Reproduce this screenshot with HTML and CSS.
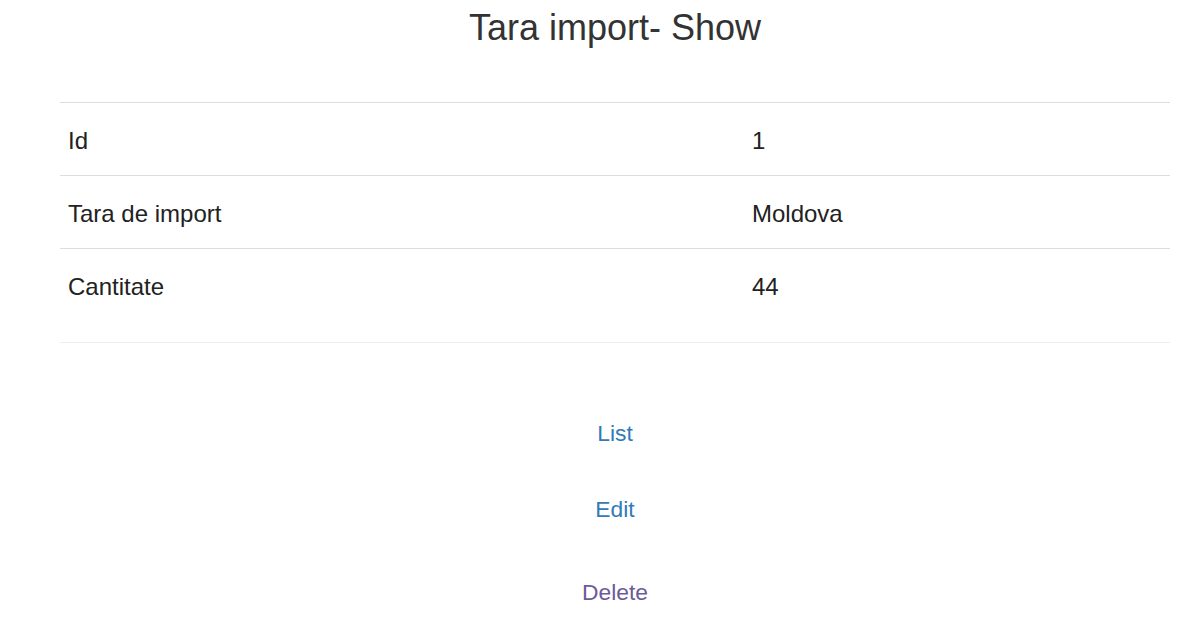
FILE: index.html
```html
<!DOCTYPE html>
<html>
<head>
<meta charset="utf-8">
<link rel="stylesheet" href="styles.css">
</head>
<body>
<div class="container">
  <h1 class="title">Tara import- Show</h1>
  <table class="details">
    <tbody>
      <tr><td class="label">Id</td><td>1</td></tr>
      <tr><td class="label">Tara de import</td><td>Moldova</td></tr>
      <tr><td class="label">Cantitate</td><td>44</td></tr>
    </tbody>
  </table>
  <hr class="sep">
  <div class="actions">
    <a class="link list" href="#">List</a>
    <a class="link edit" href="#">Edit</a>
    <button class="link delete" type="button">Delete</button>
  </div>
</div>
</body>
</html>
```

FILE: styles.css
```css
html, body {
  margin: 0;
  padding: 0;
  background: #fff;
}
body {
  font-family: "Liberation Sans", Arial, Helvetica, sans-serif;
  color: #333;
}
.container {
  width: 1110px;
  margin-left: 60px;
  padding-top: 9px;
}
.title {
  margin: 0;
  font-size: 36px;
  font-weight: 400;
  line-height: 38px;
  text-align: center;
  color: #333;
}
.details {
  width: 100%;
  border-collapse: collapse;
  margin-top: 55px;
  font-size: 24px;
  color: #222;
}
.details td {
  border-top: 1px solid #ddd;
  padding: 22px 8px 18px;
  line-height: 32px;
  vertical-align: middle;
}
.details td.label {
  width: 668px;
}
.sep {
  margin: 21px 0 0;
  border: 0;
  border-top: 1px solid #eee;
  height: 0;
}
.actions {
  display: flex;
  flex-direction: column;
  align-items: center;
  padding-top: 74px;
}
.link {
  font-family: "Liberation Sans", Arial, Helvetica, sans-serif;
  font-size: 22.8px;
  line-height: 32px;
  text-decoration: none;
  color: #337ab7;
  background: none;
  border: 0;
  padding: 0;
}
.edit {
  margin-top: 44px;
}
.delete {
  margin-top: 51px;
  color: #6c5a99;
}
```
